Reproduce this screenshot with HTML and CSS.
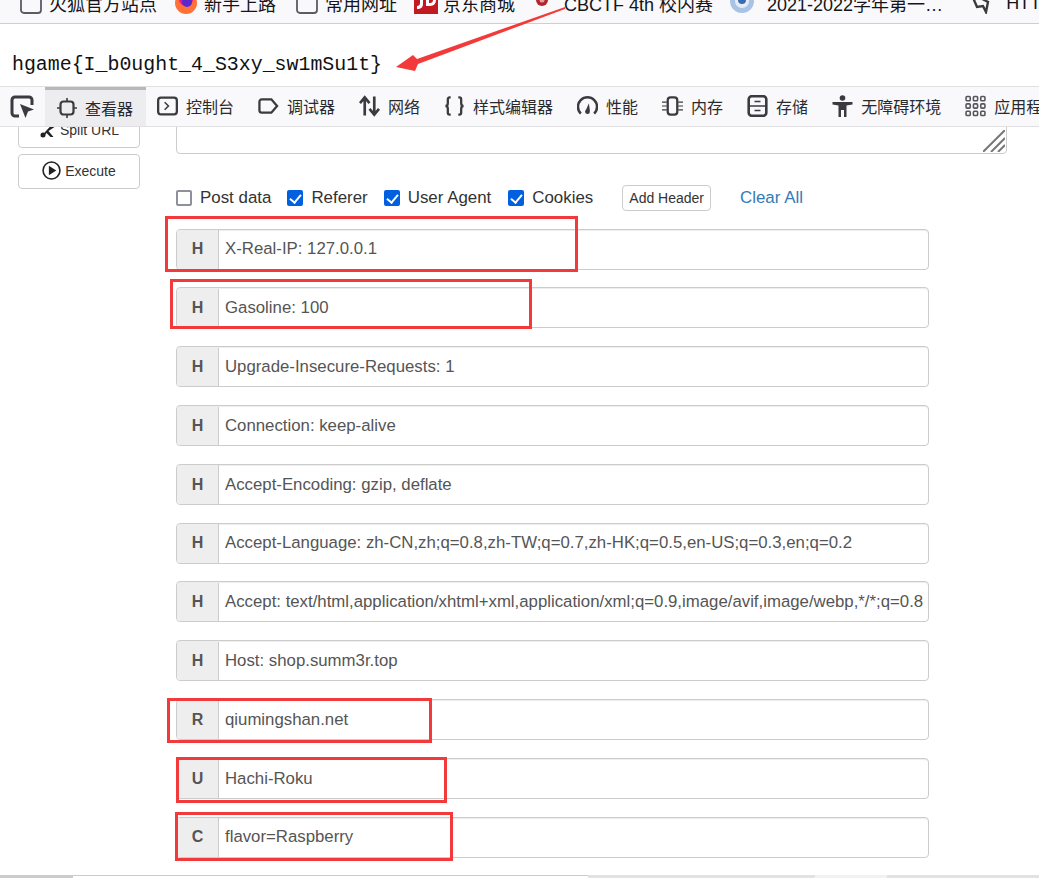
FILE: index.html
```html
<!DOCTYPE html>
<html lang="zh-CN">
<head>
<meta charset="utf-8">
<title>hgame</title>
<link rel="stylesheet" href="styles.css">
</head>
<body>
<div class="page">
  <nav class="bookmarks">
    <div class="bm-row">
      <span class="bm"><svg class="bm-icon" viewBox="0 0 22 22"><rect x="1" y="1" width="20" height="20" rx="3" class="bm-folder"/></svg>火狐官方站点</span>
      <span class="bm bm-ff"><svg class="bm-icon" viewBox="0 0 22 22"><circle cx="11" cy="11" r="11" fill="#ff7139"/><circle cx="11" cy="7" r="7" fill="#e31587"/><circle cx="12" cy="10" r="5" fill="#592acb"/><path d="M3 4c4-4 10-4 15 0l-3 3c-3-2-7-2-9 1z" fill="#ffbd4f"/></svg>新手上路</span>
      <span class="bm"><svg class="bm-icon" viewBox="0 0 22 22"><rect x="1" y="1" width="20" height="20" rx="3" class="bm-folder"/></svg>常用网址</span>
      <span class="bm bm-jd"><svg class="bm-icon-jd" viewBox="0 0 24 22"><rect width="24" height="22" fill="#c21a22"/><path d="M6 2h3v10c0 3-2 5-6 5v-3c2 0 3-1 3-3zM12 2h4c4 0 6 3 6 6s-2 6-6 6h-4z" fill="#fff"/><path d="M15 5v6h1c2 0 3-1 3-3s-1-3-3-3z" fill="#c21a22"/></svg>京东商城</span>
      <span class="bm bm-ctf"><svg class="bm-icon-ctf" viewBox="0 0 20 22"><circle cx="6" cy="8" r="6" fill="#b3262d"/><circle cx="6" cy="8" r="2.500" fill="#e9a0a3"/><path d="M10 4l9-4v3l-8 5z" fill="#c9454b"/></svg>CBCTF 4th 校内赛</span>
      <span class="bm bm-term"><svg class="bm-icon-round" viewBox="0 0 24 24"><circle cx="12" cy="10" r="12" fill="#a9c3e4"/><circle cx="12" cy="10" r="7" fill="#e4edf7"/><circle cx="12" cy="9" r="4" fill="#3b6cae"/></svg>2021-2022学年第一…</span>
      <span class="bm bm-last"><svg class="bm-icon" viewBox="0 0 22 22"><path d="M2 1l17 9-2 10-3-6-6 1z" fill="none" stroke="#3a3a40" stroke-width="2.400"/></svg>HTTP</span>
    </div>
  </nav>

  <div class="flag">hgame{I_b0ught_4_S3xy_sw1mSu1t}</div>

  <div class="devtools">
    <span class="picker"><svg class="tool-icon" viewBox="0 0 24 24"><path d="M9 21H5a3 3 0 0 1-3-3V5a3 3 0 0 1 3-3h14a3 3 0 0 1 3 3v5" fill="none" stroke="#3a3a40" stroke-width="3"/><path d="M10 9l14 5.500-6 2-2.500 6.500z" fill="#3a3a40"/></svg></span>
    <span class="tool tool-active"><svg class="tool-icon" viewBox="0 0 20 20"><rect x="3.500" y="3.500" width="13" height="13" rx="3" fill="none" stroke="#3a3a40" stroke-width="2.200"/><path d="M10 0v3.500M10 16.500V20M0 10h3.500M16.500 10H20" stroke="#3a3a40" stroke-width="1.600"/></svg>查看器</span>
    <span class="tool"><svg class="tool-icon" viewBox="0 0 22 22"><rect x="1.200" y="2.200" width="19.600" height="17.600" rx="3" fill="none" stroke="#3a3a40" stroke-width="2.400"/><path d="M8 7l4 4-4 4" fill="none" stroke="#3a3a40" stroke-width="1.600"/></svg>控制台</span>
    <span class="tool"><svg class="tool-icon" viewBox="0 0 22 22"><path d="M4 4h10l6 7-6 7H4a2.500 2.500 0 0 1-2.500-2.500v-9A2.500 2.500 0 0 1 4 4z" fill="none" stroke="#3a3a40" stroke-width="2.400"/></svg>调试器</span>
    <span class="tool"><svg class="tool-icon" viewBox="0 0 22 22"><path d="M6 21V3M1 8l5-6 5 6M16 1v18M11 14l5 6 5-6" fill="none" stroke="#3a3a40" stroke-width="2.800"/></svg>网络</span>
    <span class="tool"><svg class="tool-icon" viewBox="0 0 22 22"><path d="M7 2H6C4.500 2 4 3 4 4v4c0 2-1 3-2.500 3C3 11 4 12 4 14v4c0 1 .5 2 2 2h1M15 2h1c1.500 0 2 1 2 2v4c0 2 1 3 2.500 3-1.500 0-2.500 1-2.500 3v4c0 1-.5 2-2 2h-1" fill="none" stroke="#3a3a40" stroke-width="2.400"/></svg>样式编辑器</span>
    <span class="tool"><svg class="tool-icon" viewBox="0 0 22 22"><path d="M4 19A10 10 0 1 1 18 19" fill="none" stroke="#3a3a40" stroke-width="2.600"/><path d="M9.500 15l3-7 1 8z" fill="#3a3a40"/><circle cx="11" cy="17" r="2.500" fill="#3a3a40"/></svg>性能</span>
    <span class="tool"><svg class="tool-icon" viewBox="0 0 22 22"><rect x="6" y="2" width="10" height="18" rx="3" fill="none" stroke="#3a3a40" stroke-width="2.400"/><path d="M0 7h5M0 11h5M0 15h5M17 7h5M17 11h5M17 15h5" stroke="#3a3a40" stroke-width="1.300"/></svg>内存</span>
    <span class="tool"><svg class="tool-icon" viewBox="0 0 20 22"><rect x="1.200" y="1.200" width="17.600" height="19.600" rx="3" fill="none" stroke="#3a3a40" stroke-width="2.600"/><path d="M1 11h18M7 6.500h6M7 15.500h6" stroke="#3a3a40" stroke-width="1.500"/></svg>存储</span>
    <span class="tool"><svg class="tool-icon" viewBox="0 0 20 22"><circle cx="10" cy="3" r="2.800" fill="#3a3a40"/><path d="M0 7h20v2.500l-6 1V22h-2.500v-7h-3v7H6V10.500l-6-1z" fill="#3a3a40"/></svg>无障碍环境</span>
    <span class="tool"><svg class="tool-icon" viewBox="0 0 20 20"><g fill="none" stroke="#55555c" stroke-width="1.500"><rect x="1" y="1" width="4" height="4" rx="1"/><rect x="8" y="1" width="4" height="4" rx="1"/><rect x="15" y="1" width="4" height="4" rx="1"/><rect x="1" y="8" width="4" height="4" rx="1"/><rect x="8" y="8" width="4" height="4" rx="1"/><rect x="15" y="8" width="4" height="4" rx="1"/><rect x="1" y="15" width="4" height="4" rx="1"/><rect x="8" y="15" width="4" height="4" rx="1"/><rect x="15" y="15" width="4" height="4" rx="1"/></g></svg>应用程序</span>
  </div>

  <div class="panel">
    <aside class="sidebar">
      <button class="side-btn"><svg class="btn-icon" viewBox="0 0 16 16"><path d="M1 15L12 3l3 2-6 4 5 6h-3L7 11l-3 4z" fill="#222"/><circle cx="3.500" cy="13" r="2.500" fill="#222"/></svg>Split URL</button>
      <button class="side-btn"><svg class="btn-icon-play" viewBox="0 0 18 18"><circle cx="9" cy="9" r="8" fill="none" stroke="#222" stroke-width="1.500"/><path d="M6.500 4.500l7 4.500-7 4.500z" fill="#222"/></svg>Execute</button>
    </aside>
    <main class="main">
      <div class="textarea">
        <svg class="resizer" viewBox="0 0 22 22"><path d="M0 22L22 0M8 22L22 8M15 22l7-7" stroke="#777" stroke-width="2"/></svg>
      </div>
      <div class="options">
        <label class="opt"><input type="checkbox">Post data</label>
        <label class="opt"><input type="checkbox" checked>Referer</label>
        <label class="opt opt-ua"><input type="checkbox" checked>User Agent</label>
        <label class="opt"><input type="checkbox" checked>Cookies</label>
        <button class="add">Add Header</button>
        <a class="clear">Clear All</a>
      </div>
      <div class="rows">
        <div class="row"><b class="tag">H</b><span class="val">X-Real-IP: 127.0.0.1</span></div>
        <div class="row"><b class="tag">H</b><span class="val">Gasoline: 100</span></div>
        <div class="row"><b class="tag">H</b><span class="val">Upgrade-Insecure-Requests: 1</span></div>
        <div class="row"><b class="tag">H</b><span class="val">Connection: keep-alive</span></div>
        <div class="row"><b class="tag">H</b><span class="val">Accept-Encoding: gzip, deflate</span></div>
        <div class="row"><b class="tag">H</b><span class="val">Accept-Language: zh-CN,zh;q=0.8,zh-TW;q=0.7,zh-HK;q=0.5,en-US;q=0.3,en;q=0.2</span></div>
        <div class="row"><b class="tag">H</b><span class="val">Accept: text/html,application/xhtml+xml,application/xml;q=0.9,image/avif,image/webp,*/*;q=0.8</span></div>
        <div class="row"><b class="tag">H</b><span class="val">Host: shop.summ3r.top</span></div>
        <div class="row"><b class="tag">R</b><span class="val">qiumingshan.net</span></div>
        <div class="row"><b class="tag">U</b><span class="val">Hachi-Roku</span></div>
        <div class="row"><b class="tag">C</b><span class="val">flavor=Raspberry</span></div>
      </div>
    </main>
  </div>

  <div class="hscroll">
    <span class="hs hs-a"></span><span class="hs hs-b"></span><span class="hs hs-c"></span><span class="hs hs-d"></span><span class="hs hs-e"></span>
  </div>

  <svg class="arrow" viewBox="0 0 1039 878"><polygon points="396,67 413,55 417,59 565,7 565,9 418,64 415,71" fill="#f33a3a"/></svg>
  <span class="mark mark-1"></span>
  <span class="mark mark-2"></span>
  <span class="mark mark-3"></span>
  <span class="mark mark-4"></span>
  <span class="mark mark-5"></span>
</div>
</body>
</html>
```
FILE: styles.css
```css
* { box-sizing: border-box; }
html, body { margin: 0; padding: 0; background: #fff; }
.page {
  position: relative;
  width: 1039px;
  height: 878px;
  overflow: hidden;
  display: flex;
  flex-direction: column;
  font-family: "Liberation Sans", "Noto Sans CJK SC", sans-serif;
}

/* bookmarks bar */
.bookmarks {
  flex: none;
  height: 24px;
  overflow: hidden;
  background: #f9f9fb;
  border-bottom: 1px solid #cfcfd2;
}
.bm-row {
  display: flex;
  align-items: center;
  height: 22px;
  margin-top: -8px;
  padding-left: 20px;
  white-space: nowrap;
  font-size: 18px;
  color: #15141a;
}
.bm { display: flex; align-items: center; gap: 7px; margin-right: 18px; flex: none; }
.bm-ff { margin-right: 20px; }
.bm-icon { width: 22px; height: 22px; flex: none; }
.bm-folder { fill: none; stroke: #5b5b66; stroke-width: 1.800; }
.bm-icon-jd { width: 24px; height: 22px; flex: none; }
.bm-icon-ctf { width: 20px; height: 22px; flex: none; }
.bm-icon-round { width: 24px; height: 24px; flex: none; }
.bm-jd { margin-left: -1px; gap: 5px; margin-right: 21px; }
.bm-ctf { gap: 8px; margin-right: 17px; }
.bm-term { gap: 13px; margin-right: 26px; }
.bm-last { gap: 15px; }

/* flag line */
.flag {
  flex: none;
  height: 62px;
  padding: 28px 0 0 12px;
  font-family: "Liberation Mono", monospace;
  font-size: 19.900px;
  line-height: 26px;
  color: #111;
}

/* devtools toolbar */
.devtools {
  flex: none;
  position: relative;
  z-index: 1;
  height: 41px;
  display: flex;
  align-items: center;
  padding-left: 10px;
  background: #f9f9fb;
  border-top: 1px solid #e0e0e2;
  border-bottom: 1px solid #e0e0e2;
  white-space: nowrap;
  font-size: 16px;
  color: #2a2a2e;
  font-family: "Noto Sans CJK SC", "Liberation Sans", sans-serif;
}
.picker { display: flex; width: 35px; flex: none; }
.tool {
  flex: none;
  display: flex;
  align-items: center;
  gap: 8px;
  height: 100%;
  padding: 0 12px 2px 12px;
}
.tool-active { gap: 8px; padding-right: 13px; background: #ededf0; box-shadow: inset 0 3px 0 #b8b8bc; padding-top: 2px; padding-bottom: 0; }
.tool-active + .tool { padding-left: 11px; }
.tool-active .tool-icon { width: 20px; }
.tool-icon { width: 21px; height: 22px; flex: none; }
.picker .tool-icon { width: 24px; height: 24px; }

/* panel */
.panel {
  flex: 1;
  min-height: 0;
  overflow: hidden;
  display: flex;
  gap: 36px;
  padding-left: 18px;
}
.sidebar { flex: none; width: 122px; display: flex; flex-direction: column; gap: 6px; margin-top: -14px; }
.side-btn {
  height: 35px;
  display: flex;
  align-items: center;
  justify-content: center;
  gap: 4px;
  background: #fff;
  border: 1px solid #ccc;
  border-radius: 4px;
  font: 14px "Liberation Sans", sans-serif;
  color: #333;
  padding: 0 0 2px;
}
.btn-icon { width: 17px; height: 16px; }
.btn-icon-play { width: 19px; height: 19px; }
.main { flex: none; width: 845px; }
.textarea {
  position: relative;
  width: 831px;
  height: 37px;
  margin-top: -10px;
  border: 1px solid #ccc;
  border-radius: 4px;
  background: #fff;
}
.resizer { position: absolute; right: 1px; bottom: 1px; width: 22px; height: 22px; }
.options {
  display: flex;
  align-items: center;
  height: 28px;
  margin-top: 30px;
  font-size: 16.900px;
  color: #333;
}
.opt { display: flex; align-items: center; gap: 8px; margin-right: 16px; }
.opt-ua { margin-right: 17px; }
.opt input {
  appearance: none;
  margin: 0;
  width: 16px;
  height: 16px;
  border: 2px solid #8f8f9d;
  border-radius: 2px;
  background: #fff;
  position: relative;
}
.opt input:checked { background: #0060df; border-color: #0060df; }
.opt input:checked::after {
  content: "";
  position: absolute;
  left: 3px;
  top: 0;
  width: 5px;
  height: 9px;
  border: solid #fff;
  border-width: 0 2px 2px 0;
  transform: rotate(40deg);
}
.add {
  height: 26px;
  margin-left: 13px;
  padding: 0 6px;
  background: #fff;
  border: 1px solid #ccc;
  border-radius: 4px;
  font: 14px "Liberation Sans", sans-serif;
  color: #333;
}
.clear { margin-left: 29px; color: #337ab7; }
.rows { display: flex; flex-direction: column; gap: 17.800px; width: 753px; margin-top: 16.600px; }
.row {
  height: 41px;
  flex: none;
  display: flex;
  padding-top: .6px;
  border: 1px solid #ccc;
  border-radius: 4px;
  box-shadow: inset 0 1px 1px rgba(0,0,0,.075);
  overflow: hidden;
  font-size: 16.800px;
  color: #555;
}
.tag {
  flex: none;
  width: 42px;
  display: flex;
  align-items: center;
  justify-content: center;
  background: #eee;
  border-right: 1px solid #ccc;
  font-size: 16px;
}
.val { flex: 1; min-width: 0; display: flex; align-items: center; padding-left: 6px; white-space: nowrap; overflow: hidden; }

/* bottom scrollbar strip */
.hscroll {
  position: absolute;
  left: 0;
  right: 0;
  bottom: 0;
  height: 3px;
  display: flex;
}
.hs-a { width: 73px; background: #ccc; }
.hs-b { width: 515px; background: #fff; border-top: 1px solid #ccc; }
.hs-c { width: 227px; background: #e2e2e2; }
.hs-d { width: 72px; background: #f2f2f2; }
.hs-e { flex: 1; background: #e2e2e2; }

/* annotations drawn over the screenshot */
.arrow { position: absolute; left: 0; top: 0; width: 1039px; height: 878px; z-index: 3; }
.mark { position: absolute; z-index: 3; border: 3px solid #f33a3a; }
.mark-1 { left: 165px; top: 216px; width: 413px; height: 56px; }
.mark-2 { left: 170px; top: 279px; width: 362px; height: 50px; }
.mark-3 { left: 167px; top: 698px; width: 265px; height: 45px; }
.mark-4 { left: 176px; top: 757px; width: 271px; height: 46px; }
.mark-5 { left: 175px; top: 812px; width: 278px; height: 49px; }
```
